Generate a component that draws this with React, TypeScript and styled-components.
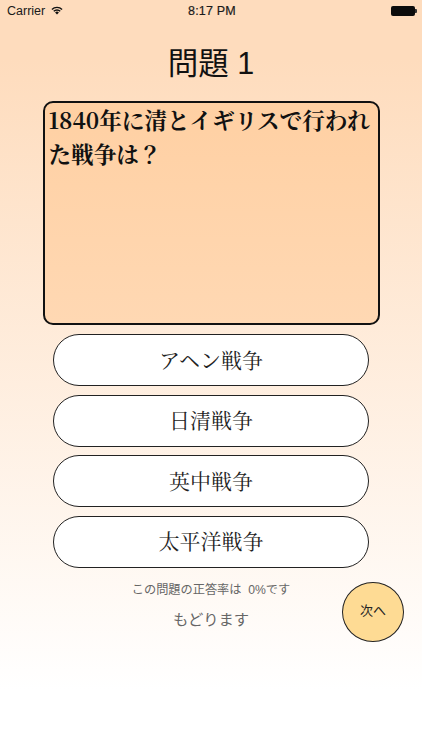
import React from "react";
import styled, { createGlobalStyle } from "styled-components";

const serif = `"Noto Serif CJK JP", "Liberation Serif", "Noto Sans CJK JP", serif`;
const sans = `"Liberation Sans", "Noto Sans CJK JP", sans-serif`;

const GlobalStyle = createGlobalStyle`
  html, body {
    margin: 0;
    padding: 0;
  }
  #root {
    width: 422px;
    height: 750px;
    overflow: hidden;
  }
`;

const answers = ["アヘン戦争", "日清戦争", "英中戦争", "太平洋戦争"];

export default function App() {
  return (
    <>
      <GlobalStyle />
      <Screen>
        <StatusBar>
          <Carrier>
            Carrier
            <svg width="12" height="9" viewBox="0 0 17 12">
              <path d="M0.6 3.9 A11 11 0 0 1 16.4 3.9 L15 5.4 A9 9 0 0 0 2 5.4 Z" fill="#111" />
              <path d="M3.2 6.5 A7.3 7.3 0 0 1 13.8 6.5 L12.4 7.9 A5.3 5.3 0 0 0 4.6 7.9 Z" fill="#111" />
              <path d="M5.8 9 A3.7 3.7 0 0 1 11.2 9 L8.5 11.8 Z" fill="#111" />
            </svg>
          </Carrier>
          <Clock>8:17 PM</Clock>
          <Battery>
            <BatteryBody />
            <BatteryCap />
          </Battery>
        </StatusBar>
        <Title>問題 1</Title>
        <QuestionBox>1840年に清とイギリスで行われた戦争は？</QuestionBox>
        <AnswerList>
          {answers.map((a) => (
            <AnswerButton key={a}>{a}</AnswerButton>
          ))}
        </AnswerList>
        <Footer>
          <RateText>この問題の正答率は&nbsp;&nbsp;0%です</RateText>
          <BackLink>もどります</BackLink>
          <NextButton>次へ</NextButton>
        </Footer>
      </Screen>
    </>
  );
}

const Screen = styled.div`
  width: 422px;
  height: 750px;
  display: flex;
  flex-direction: column;
  align-items: center;
  background: linear-gradient(180deg, #fedcbd 0%, #fedcbd 8%, #ffffff 92%);
  font-family: ${sans};
`;

const StatusBar = styled.div`
  width: 100%;
  box-sizing: border-box;
  height: 22px;
  padding: 0 5px 0 7px;
  display: grid;
  grid-template-columns: 1fr auto 1fr;
  align-items: center;
  color: #1a1a1a;
  font-size: 12.5px;
`;

const Carrier = styled.div`
  display: flex;
  align-items: center;
  gap: 6px;
  svg {
    margin-top: -1px;
  }
`;

const Clock = styled.div`
  font-size: 12.5px;
  letter-spacing: 0.2px;
  -webkit-text-stroke: 0.2px #1a1a1a;
`;

const Battery = styled.div`
  justify-self: end;
  display: flex;
  align-items: center;
`;

const BatteryBody = styled.div`
  width: 24px;
  height: 10px;
  border-radius: 2px;
  background: #0c0c0c;
`;

const BatteryCap = styled.div`
  width: 2px;
  height: 4px;
  margin-left: 0.5px;
  border-radius: 0 1px 1px 0;
  background: #333;
`;

const Title = styled.h1`
  margin: 19px 0 0;
  height: 45px;
  font-size: 30.5px;
  line-height: 44px;
  font-weight: 400;
  color: #111;
`;

const QuestionBox = styled.div`
  box-sizing: border-box;
  width: 337px;
  height: 224px;
  margin-top: 15px;
  padding: 0 2px 0 4px;
  border: 2px solid #111;
  border-radius: 10px;
  background: linear-gradient(180deg, #ffd0a3 0%, #ffd8b3 100%);
  font-family: ${serif};
  font-size: 22.6px;
  font-weight: 700;
  line-height: 33.5px;
  color: #111;
  word-break: break-all;
`;

const AnswerList = styled.div`
  margin-top: 9px;
  display: flex;
  flex-direction: column;
  gap: 8.5px;
`;

const AnswerButton = styled.button`
  box-sizing: border-box;
  width: 316px;
  height: 52px;
  padding: 0 0 3px;
  border: 1px solid #222;
  border-radius: 26px;
  background: #fff;
  font-family: ${serif};
  font-size: 21px;
  color: #222;
`;

const Footer = styled.div`
  width: 100%;
  box-sizing: border-box;
  margin-top: 14px;
  padding-right: 18px;
  display: grid;
  grid-template-columns: 1fr auto 1fr;
  grid-template-rows: 17px auto;
  row-gap: 9px;
  justify-items: center;
`;

const RateText = styled.div`
  grid-column: 2;
  grid-row: 1;
  margin-left: 18px;
  font-size: 12.2px;
  line-height: 17px;
  color: #666;
`;

const BackLink = styled.div`
  grid-column: 2;
  grid-row: 2;
  margin-left: 18px;
  font-size: 15.3px;
  line-height: 24px;
  color: #666;
`;

const NextButton = styled.button`
  grid-column: 3;
  grid-row: 1 / span 2;
  justify-self: end;
  box-sizing: border-box;
  width: 62px;
  height: 60px;
  padding: 0 0 4px;
  border: 1px solid #222;
  border-radius: 50%;
  background: #fedb94;
  font-family: ${sans};
  font-size: 13px;
  color: #222;
`;
